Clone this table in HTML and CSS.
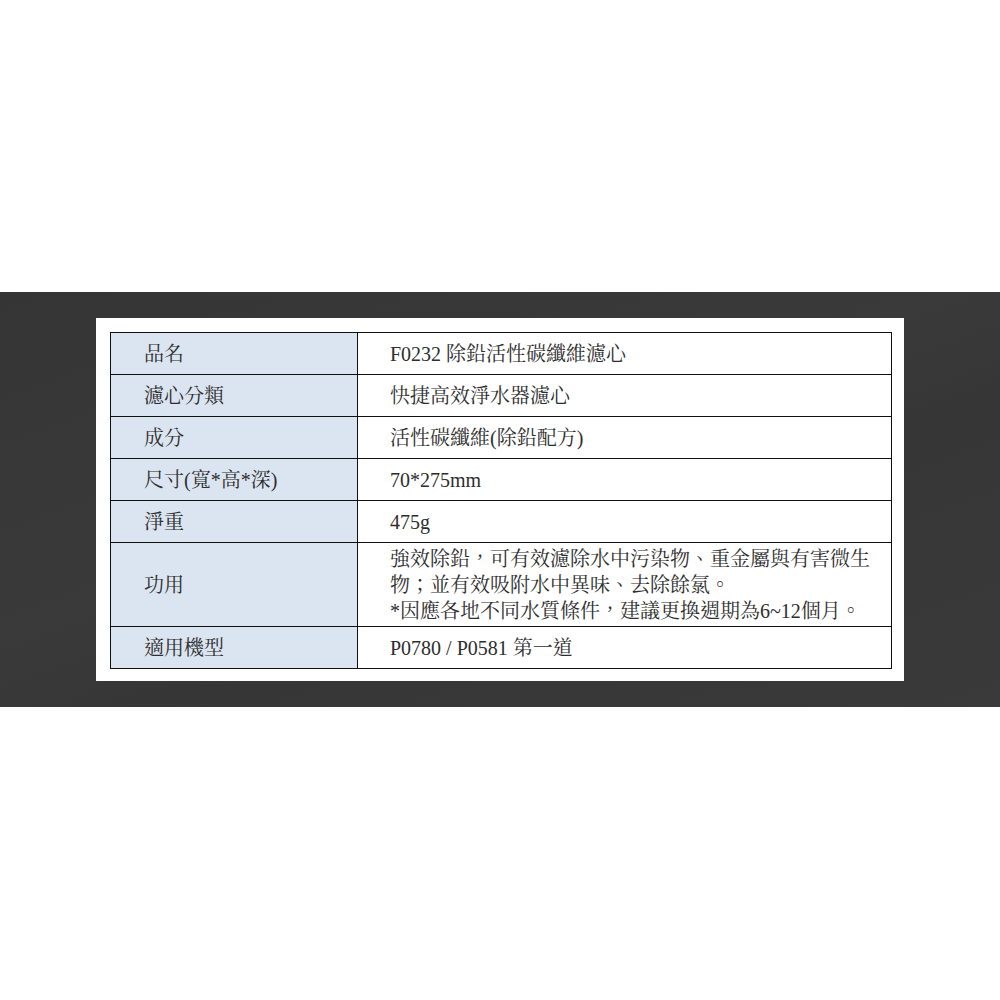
FILE: index.html
```html
<!DOCTYPE html>
<html lang="zh-Hant">
<head>
<meta charset="utf-8">
<title>F0232 規格</title>
<link rel="stylesheet" href="styles.css">
</head>
<body>
<div class="page">
  <section class="band">
    <div class="card">
      <table class="spec">
        <tr><th>品名</th><td>F0232 除鉛活性碳纖維濾心</td></tr>
        <tr><th>濾心分類</th><td>快捷高效淨水器濾心</td></tr>
        <tr><th>成分</th><td>活性碳纖維(除鉛配方)</td></tr>
        <tr><th>尺寸(寬*高*深)</th><td>70*275mm</td></tr>
        <tr><th>淨重</th><td>475g</td></tr>
        <tr class="tall"><th>功用</th><td>強效除鉛，可有效濾除水中污染物、重金屬與有害微生<br>物；並有效吸附水中異味、去除餘氯。<br>*因應各地不同水質條件，建議更換週期為6~12個月。</td></tr>
        <tr><th>適用機型</th><td>P0780 / P0581 第一道</td></tr>
      </table>
    </div>
  </section>
</div>
</body>
</html>
```

FILE: styles.css
```css
html, body {
  margin: 0;
  padding: 0;
  background: #ffffff;
}

.page {
  width: 1000px;
  height: 1000px;
  padding-top: 292px;
  box-sizing: border-box;
}

.band {
  height: 415px;
  box-sizing: border-box;
  padding: 26px 96px 0 96px;
  background: linear-gradient(160deg, #353535 0%, #3a3a3a 45%, #363636 60%, #3b3a3a 100%);
}

.card {
  width: 808px;
  height: 363px;
  box-sizing: border-box;
  background: #ffffff;
  padding: 14px 11px 0 14px;
}

.spec {
  width: 782px;
  border-collapse: collapse;
  table-layout: fixed;
  font-family: "Liberation Serif", "Noto Serif CJK TC", "Noto Sans CJK TC", serif;
  font-size: 20px;
  color: #2e2e2e;
}

.spec th,
.spec td {
  border: 1px solid #111111;
  height: 41px;
  padding: 0 0 0 33px;
  text-align: left;
  vertical-align: middle;
  font-weight: normal;
  line-height: 26px;
  white-space: nowrap;
}

.spec td {
  padding-left: 32px;
}

.spec th {
  width: 213px;
  background: #dbe5f1;
}

.spec tr.tall th,
.spec tr.tall td {
  height: 83px;
}
```
